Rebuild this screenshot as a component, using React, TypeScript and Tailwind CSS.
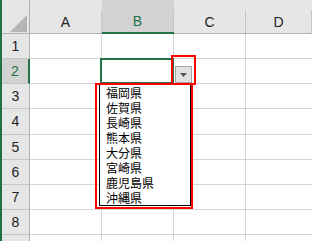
import React from 'react';

const GREEN = '#217346';
const rowHeights = ['h-[25px]', 'h-[25px]', 'h-[25px]', 'h-[26px]', 'h-[25px]', 'h-[25px]', 'h-[25px]', 'h-[25px]', 'h-[25px]'];
const items = ['福岡県', '佐賀県', '長崎県', '熊本県', '大分県', '宮崎県', '鹿児島県', '沖縄県'];

function ColHeader({ label, width, selected }: { label: string; width: string; selected?: boolean }) {
  return (
    <div
      className={`${width} flex flex-col ${
        selected ? 'bg-[#d2d2d2] border-b-2 border-b-[#217346] text-[#217346]' : 'bg-[#e6e6e6] border-b border-b-[#b1b1b1] text-[#222]'
      }`}
    >
      <div className="h-[10px]" />
      <div className="flex-1 flex items-center justify-center border-r border-r-[#c6c6c6] text-[14px] leading-none">
        {label}
      </div>
    </div>
  );
}

export default function App() {
  return (
    <div
      className="relative w-[312px] h-[241px] overflow-hidden bg-white flex"
      style={{ fontFamily: '"Liberation Sans", Arial, sans-serif' }}
    >
      <div className="w-[2px] shrink-0 bg-[#217346]" />
      <div className="flex-1 flex flex-col">
        {/* column headers */}
        <div className="h-[34px] flex shrink-0">
          <div className="w-[28px] bg-[#e6e6e6] border-r border-b border-[#b1b1b1] flex items-end justify-end pr-[2px] pb-[1px]">
            <svg width="17" height="17" viewBox="0 0 17 17">
              <polygon points="17,0 17,17 0,17" fill="#b4b4b4" />
            </svg>
          </div>
          <ColHeader label="A" width="w-[72px]" />
          <ColHeader label="B" width="w-[72px]" selected />
          <ColHeader label="C" width="w-[72px]" />
          <ColHeader label="D" width="flex-1" />
        </div>
        {/* rows */}
        {rowHeights.map((h, i) => {
          const sel = i === 1;
          return (
            <div key={i} className={`${h} flex shrink-0`}>
              <div
                className={`w-[28px] flex items-center justify-center text-[14px] border-b border-b-[#c6c6c6] ${
                  sel
                    ? 'bg-[#d2d2d2] text-[#217346] border-r-2 border-r-[#217346]'
                    : 'bg-[#e6e6e6] text-[#222] border-r border-r-[#b1b1b1]'
                }`}
              >
                {i + 1}
              </div>
              <div className="w-[72px] border-r border-b border-[#d4d4d4]" />
              <div className="w-[72px] border-r border-b border-[#d4d4d4]" />
              <div className="w-[72px] border-r border-b border-[#d4d4d4]" />
              <div className="flex-1 border-b border-[#d4d4d4]" />
            </div>
          );
        })}
      </div>

      {/* active cell B2 */}
      <div className="absolute left-[100px] top-[58px] w-[74px] h-[26px] border-2" style={{ borderColor: GREEN }} />

      {/* dropdown button */}
      <div className="absolute left-[175px] top-[66px] w-[17px] h-[17px] bg-[#e1e1e1] border border-[#a3a3a3] flex items-center justify-center">
        <svg width="7" height="4" viewBox="0 0 7 4">
          <polygon points="0,0 7,0 3.5,4" fill="#555" />
        </svg>
      </div>
      <div className="absolute left-[171px] top-[55px] w-[25px] h-[30px] border-2 border-[#ff0000]" />

      {/* dropdown list */}
      <div
        className="absolute left-[99px] top-[83px] w-[92px] h-[123px] bg-white border border-black pl-[6px] pt-[1px] text-[12px] leading-[15px] text-black"
        style={{ fontFamily: '"Noto Sans CJK JP", sans-serif' }}
      >
        {items.map((t) => (
          <div key={t}>{t}</div>
        ))}
      </div>
      <div className="absolute left-[95px] top-[83px] w-[98px] h-[126px] border-2 border-[#ff0000]" />
    </div>
  );
}
